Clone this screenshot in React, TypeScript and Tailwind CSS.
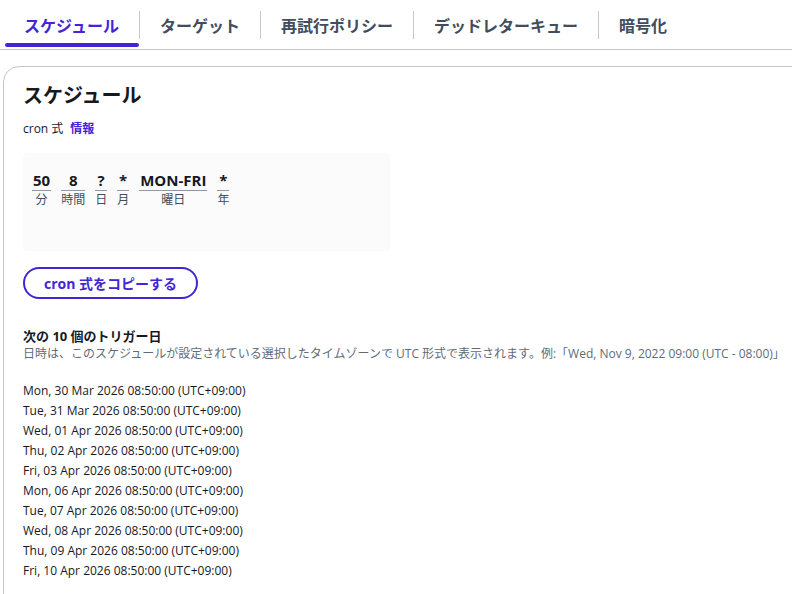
import React from 'react';

const tabs = ['スケジュール', 'ターゲット', '再試行ポリシー', 'デッドレターキュー', '暗号化'];

const cronFields = [
  { value: '50', label: '分' },
  { value: '8', label: '時間' },
  { value: '?', label: '日' },
  { value: '*', label: '月' },
  { value: 'MON-FRI', label: '曜日' },
  { value: '*', label: '年' },
];

const triggers = [
  'Mon, 30 Mar 2026 08:50:00 (UTC+09:00)',
  'Tue, 31 Mar 2026 08:50:00 (UTC+09:00)',
  'Wed, 01 Apr 2026 08:50:00 (UTC+09:00)',
  'Thu, 02 Apr 2026 08:50:00 (UTC+09:00)',
  'Fri, 03 Apr 2026 08:50:00 (UTC+09:00)',
  'Mon, 06 Apr 2026 08:50:00 (UTC+09:00)',
  'Tue, 07 Apr 2026 08:50:00 (UTC+09:00)',
  'Wed, 08 Apr 2026 08:50:00 (UTC+09:00)',
  'Thu, 09 Apr 2026 08:50:00 (UTC+09:00)',
  'Fri, 10 Apr 2026 08:50:00 (UTC+09:00)',
];

function App() {
  return (
    <div
      className="h-[594px] w-[792px] overflow-hidden bg-white text-[#16191f]"
      style={{ fontFamily: '"Open Sans", "Noto Sans CJK JP", sans-serif' }}
    >
      {/* Tabs */}
      <div className="flex h-[50px] items-stretch border-b border-[#c6c6cd] pl-[4px]">
        {tabs.map((t, i) => (
          <div key={t} className="relative flex items-center">
            {i > 0 && <div className="h-[28px] w-px bg-[#c6c6cd]" />}
            <div
              className={
                'relative flex h-full items-center px-[20px] pt-[2px] text-[16px] font-bold ' +
                (i === 0 ? 'text-[#4325d6]' : 'text-[#414d5c]')
              }
            >
              {t}
              {i === 0 && (
                <div className="absolute bottom-[2px] left-[1px] right-0 h-[4px] rounded-full bg-[#4325d6]" />
              )}
            </div>
          </div>
        ))}
      </div>

      {/* Card */}
      <div className="ml-[3px] mt-[16px] w-[820px] rounded-[16px] border border-[#c6c6cd] bg-white pb-[30px] pl-[19px] pt-[14px]">
        <h2 className="text-[20px] font-bold leading-[30px] text-[#16191f]">スケジュール</h2>

        <div className="mt-[10px] flex items-center gap-[7px] text-[12px] leading-[16px] text-[#16191f]">
          <span>cron 式</span>
          <span className="font-bold text-[#4325d6]">情報</span>
        </div>

        <div className="mt-[16px] h-[98px] w-[367px] rounded-[4px] bg-[#fbfbfc] pl-[9px] pt-[18px]">
          <div className="flex gap-[10px]">
            {cronFields.map((f, i) => (
              <div key={i} className="flex flex-col items-center">
                <div className="px-[1px] text-[15px] font-bold leading-[19px] text-[#16191f]">{f.value}</div>
                <div className="h-px w-full bg-[#8d99a8]" />
                <div className="text-[12px] leading-[17px] text-[#414d5c]">{f.label}</div>
              </div>
            ))}
          </div>
        </div>

        <button className="mt-[16px] flex h-[32px] items-center rounded-full border-2 border-[#4325d6] px-[19px] text-[14px] font-bold text-[#4325d6]">
          cron 式をコピーする
        </button>

        <div className="mt-[28px] text-[13px] font-bold leading-[18px] text-[#16191f]">次の 10 個のトリガー日</div>
        <div className="text-[12px] leading-[17px] text-[#5f6b7a]">
          日時は、このスケジュールが設定されている選択したタイムゾーンで UTC 形式で表示されます。例:「Wed, Nov 9, 2022 09:00 (UTC - 08:00)」
        </div>

        <div className="mt-[19px] flex flex-col">
          {triggers.map((d) => (
            <div key={d} className="text-[12px] leading-[20px] text-[#16191f]">
              {d}
            </div>
          ))}
        </div>
      </div>
    </div>
  );
}

export default App;
